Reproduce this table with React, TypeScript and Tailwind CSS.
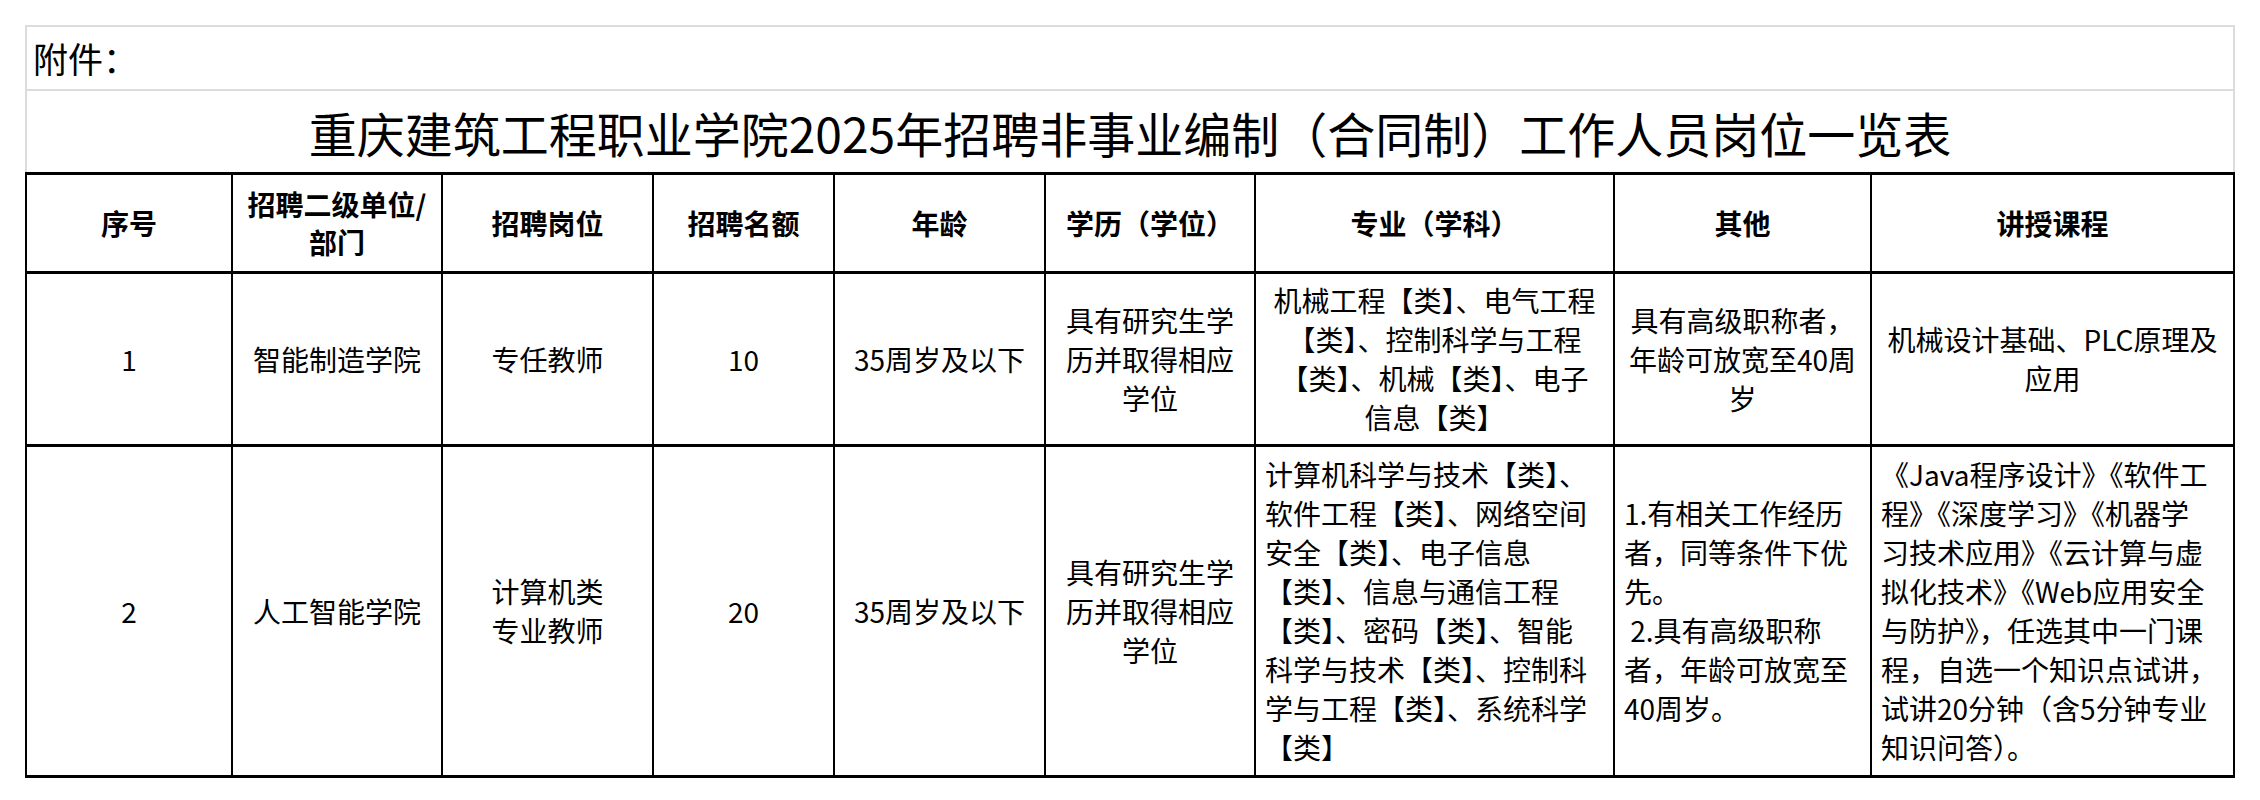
import React from 'react';

type Cell = { lines: string[]; align?: 'center' | 'left' };

const columns = [206, 210, 211, 181, 211, 210, 359, 257, 363];

const headers: string[][] = [
    ['序号'],
    ['招聘二级单位/', '部门'],
    ['招聘岗位'],
    ['招聘名额'],
    ['年龄'],
    ['学历（学位）'],
    ['专业（学科）'],
    ['其他'],
    ['讲授课程'],
];

const rows: { height: string; cells: Cell[] }[] = [
    {
        height: 'h-[173px]',
        cells: [
            { lines: ['1'] },
            { lines: ['智能制造学院'] },
            { lines: ['专任教师'] },
            { lines: ['10'] },
            { lines: ['35周岁及以下'] },
            { lines: ['具有研究生学', '历并取得相应', '学位'] },
            { lines: ['机械工程【类】、电气工程', '【类】、控制科学与工程', '【类】、机械【类】、电子', '信息【类】'] },
            { lines: ['具有高级职称者，', '年龄可放宽至40周', '岁'] },
            { lines: ['机械设计基础、PLC原理及', '应用'] },
        ],
    },
    {
        height: 'h-[331px]',
        cells: [
            { lines: ['2'] },
            { lines: ['人工智能学院'] },
            { lines: ['计算机类', '专业教师'] },
            { lines: ['20'] },
            { lines: ['35周岁及以下'] },
            { lines: ['具有研究生学', '历并取得相应', '学位'] },
            {
                align: 'left',
                lines: [
                    '计算机科学与技术【类】、',
                    '软件工程【类】、网络空间',
                    '安全【类】、电子信息',
                    '【类】、信息与通信工程',
                    '【类】、密码【类】、智能',
                    '科学与技术【类】、控制科',
                    '学与工程【类】、系统科学',
                    '【类】',
                ],
            },
            {
                align: 'left',
                lines: ['1.有相关工作经历', '者，同等条件下优', '先。', ' 2.具有高级职称', '者，年龄可放宽至', '40周岁。'],
            },
            {
                align: 'left',
                lines: [
                    '《Java程序设计》《软件工',
                    '程》《深度学习》《机器学',
                    '习技术应用》《云计算与虚',
                    '拟化技术》《Web应用安全',
                    '与防护》，任选其中一门课',
                    '程，自选一个知识点试讲，',
                    '试讲20分钟（含5分钟专业',
                    '知识问答）。',
                ],
            },
        ],
    },
];

function Lines({ lines }: { lines: string[] }) {
    return (
        <>
            {lines.map((l, i) => (
                <div key={i} className="whitespace-pre">
                    {l}
                </div>
            ))}
        </>
    );
}

export default function App() {
    return (
        <div className="min-h-[800px] bg-white pt-[25px] pl-[25px] font-['Noto_Sans_CJK_SC',sans-serif] text-black">
            <div className="w-[2210px] border-x-2 border-t-2 border-[#dcdcdc]">
                <div className="flex h-[64px] items-center border-b-2 border-[#dcdcdc] pl-[6px] text-[35px]">附件：</div>
                <div className="flex h-[81px] items-center justify-center text-[48px] leading-none">
                    重庆建筑工程职业学院2025年招聘非事业编制（合同制）工作人员岗位一览表
                </div>
            </div>
            <table className="w-[2210px] table-fixed border-collapse text-[28px] leading-[39px]">
                <colgroup>
                    {columns.map((w, i) => (
                        <col key={i} style={{ width: w }} />
                    ))}
                </colgroup>
                <thead>
                    <tr className="h-[99px]">
                        {headers.map((h, i) => (
                            <th
                                key={i}
                                className="border-x-2 border-y-[3px] border-black px-[6px] text-center align-middle font-bold leading-[38px]"
                            >
                                <Lines lines={h} />
                            </th>
                        ))}
                    </tr>
                </thead>
                <tbody>
                    {rows.map((r, ri) => (
                        <tr key={ri} className={r.height}>
                            {r.cells.map((c, ci) => (
                                <td
                                    key={ci}
                                    className={
                                        c.align === 'left'
                                            ? 'border-x-2 border-y-[3px] border-black pl-[9px] pr-[4px] text-left align-middle'
                                            : 'border-x-2 border-y-[3px] border-black px-[6px] text-center align-middle'
                                    }
                                >
                                    <Lines lines={c.lines} />
                                </td>
                            ))}
                        </tr>
                    ))}
                </tbody>
            </table>
        </div>
    );
}
